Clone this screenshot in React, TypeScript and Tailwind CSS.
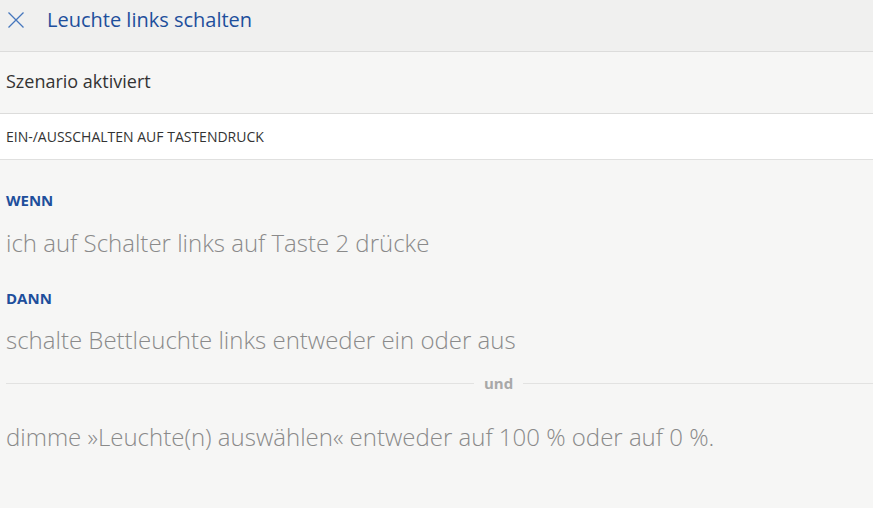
export default function App() {
  return (
    <div
      className="h-[508px] bg-[#f6f6f5] text-[#333]"
      style={{ fontFamily: '"Open Sans", "Noto Sans", sans-serif' }}
    >
      {/* Header */}
      <header className="h-[52px] bg-[#f0f0ef] border-b border-[#dcdcdb] flex items-start pt-[6px]">
        <button className="w-[32px] h-[28px] pl-[8px] flex items-center text-[#4677bd]">
          <svg width="16" height="16" viewBox="0 0 16 16" fill="none" stroke="currentColor" strokeWidth="1.3">
            <path d="M0.5 0.5 L15.5 15.5 M15.5 0.5 L0.5 15.5" />
          </svg>
        </button>
        <h1 className="ml-[15px] text-[20px] text-[#1e4f9c] leading-[28px]">Leuchte links schalten</h1>
      </header>

      {/* Status */}
      <div className="h-[62px] border-b border-[#dcdcdb] flex items-center px-[6px] pb-[2px]">
        <span className="text-[18px] text-[#333]">Szenario aktiviert</span>
      </div>

      {/* Scenario type */}
      <div className="h-[46px] bg-white border-b border-[#e0e0df] flex items-center px-[6px]">
        <span className="text-[14px] text-[#333] uppercase">Ein-/Ausschalten auf Tastendruck</span>
      </div>

      {/* Rule */}
      <div className="px-[6px] pt-[30px]">
        <div className="text-[15px] font-bold text-[#1e4f9c] leading-[20px]">WENN</div>
        <div className="mt-[17px] text-[24px] font-light text-[#8a8a8a] leading-[32px]">
          ich auf Schalter links auf Taste 2 drücke
        </div>

        <div className="mt-[29px] text-[15px] font-bold text-[#1e4f9c] leading-[20px]">DANN</div>
        <div className="mt-[16px] text-[24px] font-light text-[#8a8a8a] leading-[32px]">
          schalte Bettleuchte links entweder ein oder aus
        </div>

        <div className="mt-[17px] h-[20px] flex items-center gap-[10px] -mr-[6px]">
          <div className="w-[468px] h-px bg-[#e2e2e1]" />
          <span className="text-[15px] font-bold text-[#a8a8a8] leading-none">und</span>
          <div className="flex-1 h-px bg-[#e2e2e1]" />
        </div>

        <div className="mt-[28px] text-[24px] font-light text-[#8a8a8a] leading-[32px]">
          dimme »Leuchte(n) auswählen« entweder auf 100 % oder auf 0 %.
        </div>
      </div>
    </div>
  );
}
